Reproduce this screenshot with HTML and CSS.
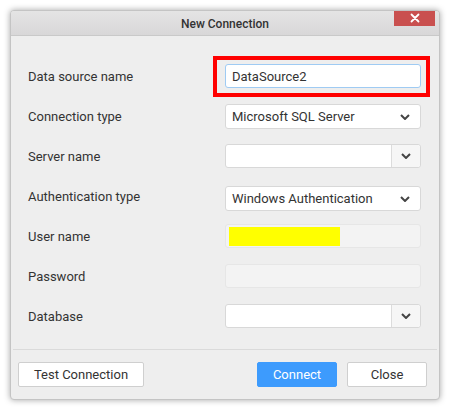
FILE: index.html
```html
<!DOCTYPE html>
<html>
<head>
<meta charset="utf-8">
<link rel="stylesheet" href="styles.css">
</head>
<body>
<div class="dialog">
  <div class="titlebar">
    <span class="title">New Connection</span>
    <button class="close" aria-label="Close">
      <svg width="10" height="10" viewBox="0 0 10 10"><path d="M1.5 1.5L8.5 8.5M8.5 1.5L1.5 8.5" stroke="#fff" stroke-width="1.8" stroke-linecap="round"/></svg>
    </button>
  </div>
  <div class="form">
    <div class="row">
      <label class="label">Data source name</label>
      <div class="field highlight-wrap">
        <div class="input focused">DataSource2</div>
        <div class="highlight"></div>
      </div>
    </div>
    <div class="row">
      <label class="label">Connection type</label>
      <div class="field">
        <div class="input select"><span>Microsoft SQL Server</span>
          <svg class="chev" width="10" height="6" viewBox="0 0 10 6"><path d="M1 1L5 5L9 1" fill="none" stroke="#444" stroke-width="2"/></svg>
        </div>
      </div>
    </div>
    <div class="row">
      <label class="label">Server name</label>
      <div class="field">
        <div class="input combo"><span class="combo-text"></span>
          <span class="combo-btn"><svg width="10" height="6" viewBox="0 0 10 6"><path d="M1 1L5 5L9 1" fill="none" stroke="#444" stroke-width="2"/></svg></span>
        </div>
      </div>
    </div>
    <div class="row">
      <label class="label">Authentication type</label>
      <div class="field">
        <div class="input select lower"><span>Windows Authentication</span>
          <svg class="chev" width="10" height="6" viewBox="0 0 10 6"><path d="M1 1L5 5L9 1" fill="none" stroke="#444" stroke-width="2"/></svg>
        </div>
      </div>
    </div>
    <div class="row">
      <label class="label">User name</label>
      <div class="field">
        <div class="input disabled user"><span class="redact"></span></div>
      </div>
    </div>
    <div class="row">
      <label class="label">Password</label>
      <div class="field">
        <div class="input disabled"></div>
      </div>
    </div>
    <div class="row">
      <label class="label">Database</label>
      <div class="field">
        <div class="input combo"><span class="combo-text"></span>
          <span class="combo-btn"><svg width="10" height="6" viewBox="0 0 10 6"><path d="M1 1L5 5L9 1" fill="none" stroke="#444" stroke-width="2"/></svg></span>
        </div>
      </div>
    </div>
  </div>
  <div class="footer">
    <button class="btn test">Test Connection</button>
    <div class="footer-right">
      <button class="btn primary">Connect</button>
      <button class="btn">Close</button>
    </div>
  </div>
</div>
</body>
</html>
```

FILE: styles.css
```css
html, body {
  margin: 0;
  padding: 0;
  background: #ffffff;
}
body {
  padding: 10px;
  font-family: Roboto, "Liberation Sans", sans-serif;
  font-size: 13px;
  color: #333;
}
.dialog {
  width: 430px;
  height: 390px;
  box-sizing: border-box;
  border: 1px solid #c4c4c4;
  border-radius: 4px;
  background: #eeeeee;
  box-shadow: 0 0 6px rgba(0,0,0,0.35);
  display: flex;
  flex-direction: column;
  overflow: hidden;
}
.titlebar {
  position: relative;
  height: 24px;
  flex: none;
  background: linear-gradient(#e4e4e4, #d8d7d8);
  border-bottom: 1px solid #c9c9c9;
  display: flex;
  align-items: center;
  justify-content: center;
}
.title {
  font-size: 12px;
  font-weight: 500;
  color: #333;
  padding-top: 1px;
}
.close {
  position: absolute;
  right: 4px;
  top: -1px;
  width: 41px;
  height: 16px;
  border: none;
  background: #c9504f;
  padding: 0;
  display: flex;
  align-items: center;
  justify-content: center;
}
.form {
  padding: 20px 18px 13px 17px;
  flex: 1;
}
.row {
  height: 40px;
  display: grid;
  grid-template-columns: 197px 196px;
  align-items: center;
}
.label {
  font-size: 13px;
  color: #333;
}
.field {
  height: 24px;
}
.highlight-wrap {
  position: relative;
}
.highlight {
  position: absolute;
  left: -12px;
  top: -8px;
  right: -9px;
  bottom: -9px;
  border: 4px solid #ff0000;
}
.input {
  box-sizing: border-box;
  height: 24px;
  background: #fff;
  border: 1px solid #d8d8d8;
  border-radius: 3px;
  display: flex;
  align-items: center;
  padding: 0 6px;
  font-size: 13px;
  color: #333;
}
.input.focused {
  border-color: #9fcbf3;
}
.select {
  justify-content: space-between;
  padding: 0 10px 0 6px;
  height: 25px;
}
.select.lower {
  margin-top: 2px;
}
.chev {
  display: block;
}
.combo {
  padding: 0;
}
.combo-text {
  flex: 1;
}
.combo-btn {
  width: 29px;
  height: 100%;
  box-sizing: border-box;
  border-left: 1px solid #dcdcdc;
  background: #f6f6f6;
  border-radius: 0 3px 3px 0;
  display: flex;
  align-items: center;
  justify-content: center;
}
.disabled {
  background: #f3f3f3;
  border-color: #e6e6e6;
}
.user {
  padding: 2px 3px;
  align-items: stretch;
}
.redact {
  width: 111px;
  height: 19px;
  background: #ffff00;
  display: block;
}
.footer {
  flex: none;
  height: 50px;
  margin: 0 2px;
  border-top: 1px solid #dadada;
  box-sizing: border-box;
  display: flex;
  align-items: center;
  justify-content: space-between;
  padding: 0 10px 1px 5px;
}
.footer-right {
  display: flex;
  gap: 10px;
}
.btn {
  height: 25px;
  width: 80px;
  box-sizing: border-box;
  background: #fff;
  border: 1px solid #cfcfcf;
  border-radius: 2px;
  font-family: Roboto, "Liberation Sans", sans-serif;
  font-size: 13px;
  color: #333;
  padding: 0;
}
.btn.test {
  width: 126px;
}
.btn.primary {
  background: #3d9bfd;
  border-color: #3d9bfd;
  color: #fff;
}
```
